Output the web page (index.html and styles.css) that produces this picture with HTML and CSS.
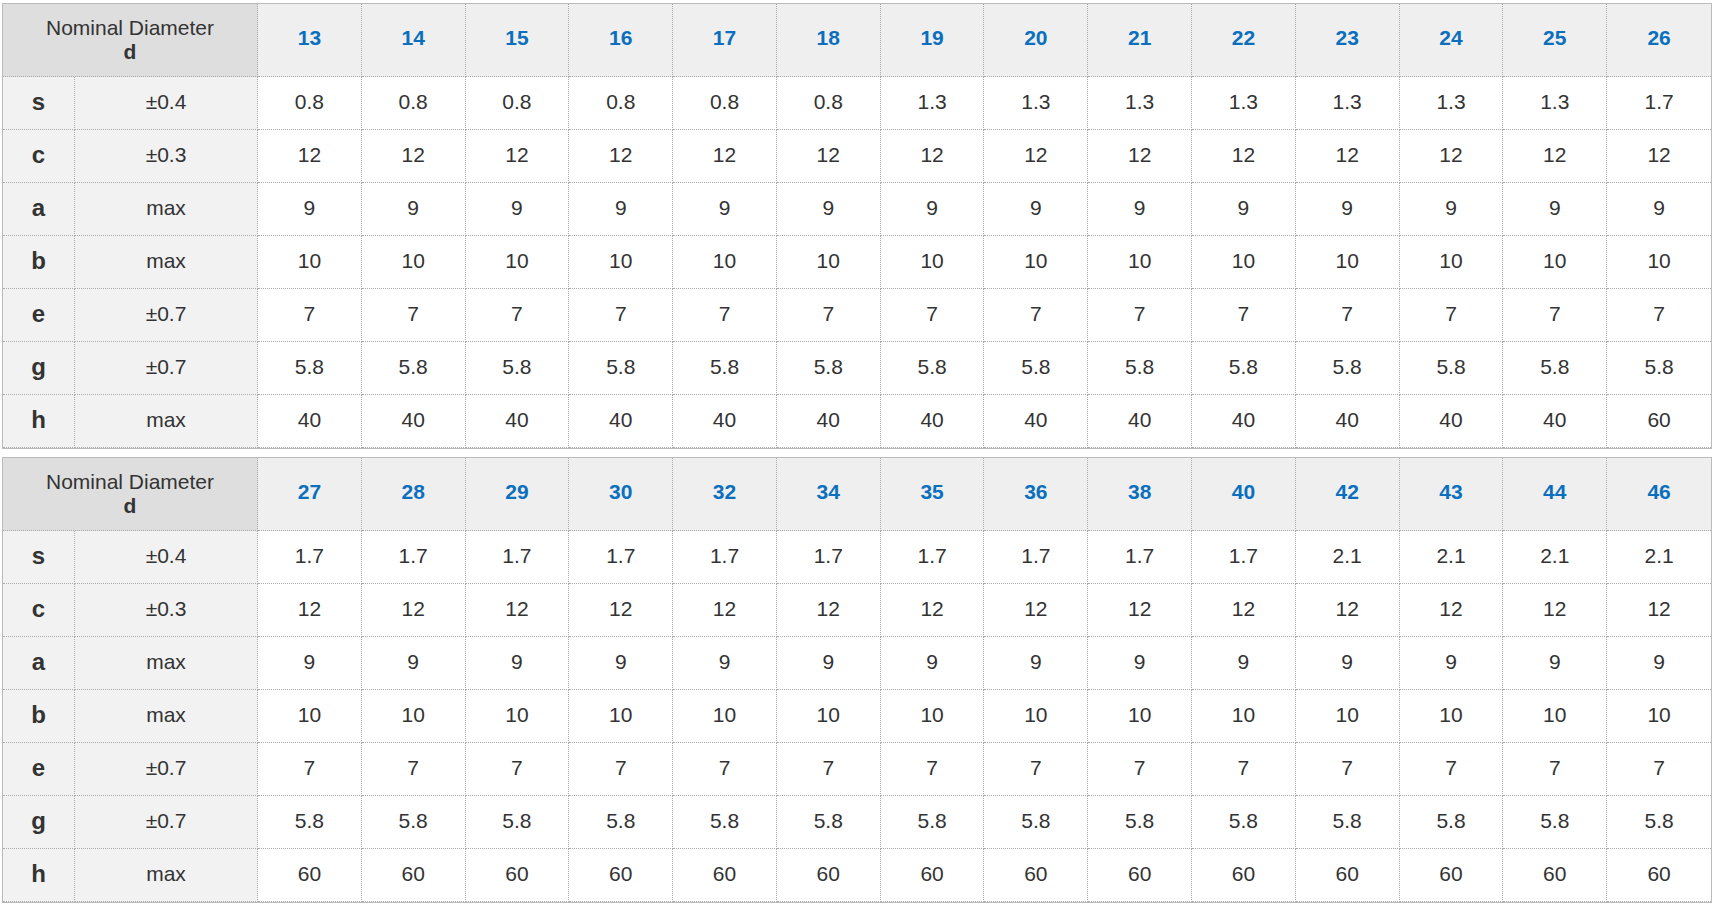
FILE: index.html
```html
<!DOCTYPE html>
<html>
<head>
<meta charset="utf-8">
<link rel="stylesheet" href="styles.css">
</head>
<body>
<div class="page">
<table class="spec">
<colgroup><col class="c-sym"><col class="c-tol"><col span="14"></colgroup>
<thead>
<tr><th colspan="2" class="nom">Nominal Diameter<br><b>d</b></th><th>13</th><th>14</th><th>15</th><th>16</th><th>17</th><th>18</th><th>19</th><th>20</th><th>21</th><th>22</th><th>23</th><th>24</th><th>25</th><th>26</th></tr>
</thead>
<tbody>
<tr><td class="sym">s</td><td class="tol">±0.4</td><td>0.8</td><td>0.8</td><td>0.8</td><td>0.8</td><td>0.8</td><td>0.8</td><td>1.3</td><td>1.3</td><td>1.3</td><td>1.3</td><td>1.3</td><td>1.3</td><td>1.3</td><td>1.7</td></tr>
<tr><td class="sym">c</td><td class="tol">±0.3</td><td>12</td><td>12</td><td>12</td><td>12</td><td>12</td><td>12</td><td>12</td><td>12</td><td>12</td><td>12</td><td>12</td><td>12</td><td>12</td><td>12</td></tr>
<tr><td class="sym">a</td><td class="tol">max</td><td>9</td><td>9</td><td>9</td><td>9</td><td>9</td><td>9</td><td>9</td><td>9</td><td>9</td><td>9</td><td>9</td><td>9</td><td>9</td><td>9</td></tr>
<tr><td class="sym">b</td><td class="tol">max</td><td>10</td><td>10</td><td>10</td><td>10</td><td>10</td><td>10</td><td>10</td><td>10</td><td>10</td><td>10</td><td>10</td><td>10</td><td>10</td><td>10</td></tr>
<tr><td class="sym">e</td><td class="tol">±0.7</td><td>7</td><td>7</td><td>7</td><td>7</td><td>7</td><td>7</td><td>7</td><td>7</td><td>7</td><td>7</td><td>7</td><td>7</td><td>7</td><td>7</td></tr>
<tr><td class="sym">g</td><td class="tol">±0.7</td><td>5.8</td><td>5.8</td><td>5.8</td><td>5.8</td><td>5.8</td><td>5.8</td><td>5.8</td><td>5.8</td><td>5.8</td><td>5.8</td><td>5.8</td><td>5.8</td><td>5.8</td><td>5.8</td></tr>
<tr><td class="sym">h</td><td class="tol">max</td><td>40</td><td>40</td><td>40</td><td>40</td><td>40</td><td>40</td><td>40</td><td>40</td><td>40</td><td>40</td><td>40</td><td>40</td><td>40</td><td>60</td></tr>
</tbody>
</table>
<table class="spec">
<colgroup><col class="c-sym"><col class="c-tol"><col span="14"></colgroup>
<thead>
<tr><th colspan="2" class="nom">Nominal Diameter<br><b>d</b></th><th>27</th><th>28</th><th>29</th><th>30</th><th>32</th><th>34</th><th>35</th><th>36</th><th>38</th><th>40</th><th>42</th><th>43</th><th>44</th><th>46</th></tr>
</thead>
<tbody>
<tr><td class="sym">s</td><td class="tol">±0.4</td><td>1.7</td><td>1.7</td><td>1.7</td><td>1.7</td><td>1.7</td><td>1.7</td><td>1.7</td><td>1.7</td><td>1.7</td><td>1.7</td><td>2.1</td><td>2.1</td><td>2.1</td><td>2.1</td></tr>
<tr><td class="sym">c</td><td class="tol">±0.3</td><td>12</td><td>12</td><td>12</td><td>12</td><td>12</td><td>12</td><td>12</td><td>12</td><td>12</td><td>12</td><td>12</td><td>12</td><td>12</td><td>12</td></tr>
<tr><td class="sym">a</td><td class="tol">max</td><td>9</td><td>9</td><td>9</td><td>9</td><td>9</td><td>9</td><td>9</td><td>9</td><td>9</td><td>9</td><td>9</td><td>9</td><td>9</td><td>9</td></tr>
<tr><td class="sym">b</td><td class="tol">max</td><td>10</td><td>10</td><td>10</td><td>10</td><td>10</td><td>10</td><td>10</td><td>10</td><td>10</td><td>10</td><td>10</td><td>10</td><td>10</td><td>10</td></tr>
<tr><td class="sym">e</td><td class="tol">±0.7</td><td>7</td><td>7</td><td>7</td><td>7</td><td>7</td><td>7</td><td>7</td><td>7</td><td>7</td><td>7</td><td>7</td><td>7</td><td>7</td><td>7</td></tr>
<tr><td class="sym">g</td><td class="tol">±0.7</td><td>5.8</td><td>5.8</td><td>5.8</td><td>5.8</td><td>5.8</td><td>5.8</td><td>5.8</td><td>5.8</td><td>5.8</td><td>5.8</td><td>5.8</td><td>5.8</td><td>5.8</td><td>5.8</td></tr>
<tr><td class="sym">h</td><td class="tol">max</td><td>60</td><td>60</td><td>60</td><td>60</td><td>60</td><td>60</td><td>60</td><td>60</td><td>60</td><td>60</td><td>60</td><td>60</td><td>60</td><td>60</td></tr>
</tbody>
</table>
</div>
</body>
</html>
```

FILE: styles.css
```css
html, body {
  margin: 0;
  padding: 0;
  background: #fff;
}
.page {
  padding: 3px 0 0 2px;
  display: flex;
  flex-direction: column;
  gap: 8px;
  align-items: flex-start;
}
.spec {
  width: 1710px;
  table-layout: fixed;
  border-collapse: separate;
  border-spacing: 0;
  border: 1px solid #bbb;
  font-family: "Liberation Sans", Arial, sans-serif;
  font-size: 21px;
  color: #333;
}
.c-sym { width: 72px; }
.c-tol { width: 183px; }
.spec th, .spec td {
  box-sizing: border-box;
  padding: 0;
  text-align: center;
  vertical-align: middle;
  border-right: 1px dotted #aaa;
  border-bottom: 1px dotted #aaa;
}
.spec th:last-child, .spec td:last-child {
  border-right: none;
}
.spec thead tr { height: 73px; }
.spec tbody tr { height: 53px; }
.spec th {
  background: #efefef;
  color: #0b6fbe;
  font-weight: bold;
  line-height: 24px;
  padding-bottom: 4px;
}
.spec th.nom {
  background: #dedede;
  color: #333;
  font-weight: normal;
  padding-bottom: 1px;
}
.spec th.nom b { font-weight: bold; }
.spec td.sym, .spec td.tol {
  background: #f2f2f2;
}
.spec td {
  padding-bottom: 3px;
}
.spec td.sym {
  font-weight: bold;
  font-size: 24px;
}
```
